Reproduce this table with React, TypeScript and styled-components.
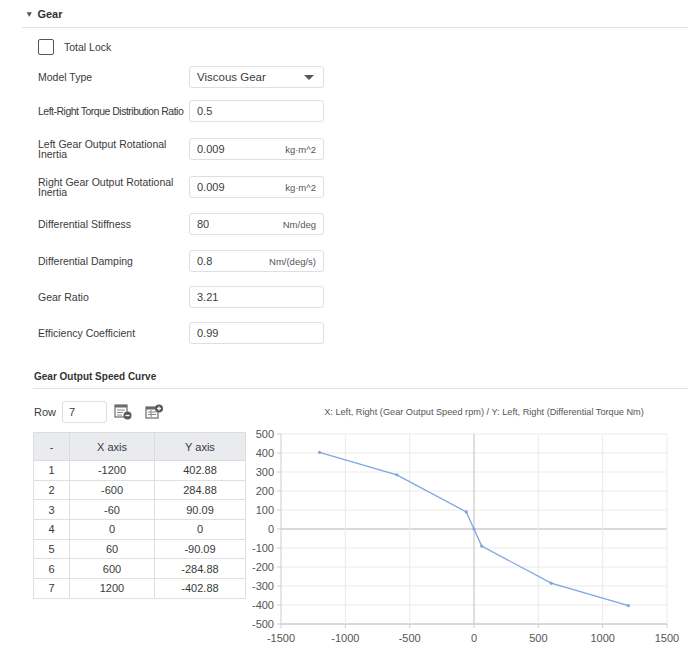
import React from 'react';
import styled, { createGlobalStyle } from 'styled-components';

const GlobalStyle = createGlobalStyle`
  html, body {
    margin: 0;
    padding: 0;
    background: #ffffff;
  }
  body {
    font-family: "Liberation Sans", Arial, sans-serif;
    color: #3a3a3a;
  }
  * {
    box-sizing: border-box;
  }
`;

const Page = styled.div`
  width: 698px;
  padding: 0 10px 0 22px;
`;

const SectionHeader = styled.div`
  height: 28px;
  display: flex;
  align-items: center;
  gap: 4px;
  padding-left: 3px;
  border-bottom: 1px solid #e4e4e4;
  font-size: 11px;
  font-weight: bold;
  color: #333;
`;

const Caret = styled.span`
  font-size: 8.5px;
  color: #555;
`;

const FormBody = styled.div`
  padding-left: 16px;
  display: flex;
  flex-direction: column;
`;

const FormRow = styled.div<{ $space?: number }>`
  display: flex;
  align-items: center;
  height: 22px;
  margin-top: ${(p) => p.$space ?? 14}px;
`;

const CheckBox = styled.span`
  width: 16px;
  height: 16px;
  border: 1.5px solid #555;
  border-radius: 2px;
  margin-right: 10px;
`;

const CheckLabel = styled.span`
  font-size: 10.5px;
  color: #3a3a3a;
`;

const Label = styled.div<{ $tight?: boolean }>`
  width: 151px;
  flex-shrink: 0;
  font-size: 10.5px;
  letter-spacing: ${(p) => (p.$tight ? '-0.5px' : '0')};
  white-space: ${(p) => (p.$tight ? 'nowrap' : 'normal')};
  line-height: 10px;
  padding-right: 12px;
  color: #3a3a3a;
`;

const Field = styled.div`
  width: 135px;
  height: 22px;
  border: 1px solid #dcdfe4;
  border-radius: 3px;
  display: flex;
  align-items: center;
  justify-content: space-between;
  padding: 0 7px 0 7px;
  background: #fff;
`;

const Value = styled.span`
  font-size: 11px;
  color: #3c3c3c;
`;

const SelectValue = styled.span`
  font-size: 11.5px;
  color: #3c3c3c;
`;

const Unit = styled.span`
  font-size: 9.5px;
  color: #555;
`;

const SelectArrow = styled.span`
  width: 0;
  height: 0;
  border-left: 5px solid transparent;
  border-right: 5px solid transparent;
  border-top: 5px solid #555;
  margin-right: 2px;
`;

const Curve = styled.div`
  padding-left: 11px;
  margin-top: 21px;
`;

const SubHeader = styled.div`
  height: 24px;
  display: flex;
  align-items: center;
  padding-left: 1px;
  border-bottom: 1px solid #e4e4e4;
  font-size: 10px;
  font-weight: bold;
  color: #333;
`;

const Columns = styled.div`
  display: flex;
  gap: 3px;
  padding-top: 12px;
`;

const LeftColumn = styled.div`
  width: 212px;
  flex-shrink: 0;
`;

const RightColumn = styled.div`
  flex: 1;
  display: flex;
  flex-direction: column;
`;

const Toolbar = styled.div`
  height: 22px;
  display: flex;
  align-items: center;
`;

const RowLabel = styled.span`
  font-size: 11px;
  padding-left: 1px;
  width: 29px;
  color: #3a3a3a;
`;

const RowInput = styled.div`
  width: 45px;
  height: 22px;
  border: 1px solid #dcdfe4;
  border-radius: 3px;
  display: flex;
  align-items: center;
  padding-left: 6px;
  font-size: 11px;
  color: #3c3c3c;
`;

const IconButton = styled.span<{ $ml: number }>`
  display: inline-flex;
  margin-left: ${(p) => p.$ml}px;
`;

const Table = styled.table`
  margin-top: 9px;
  width: 212px;
  border-collapse: collapse;
  font-size: 11px;
  color: #3a3a3a;
  table-layout: fixed;
`;

const HeadCell = styled.th<{ $w: number }>`
  width: ${(p) => p.$w}px;
  height: 28px;
  background: #e9ebee;
  border: 1px solid #dcdcdc;
  font-weight: normal;
  text-align: center;
  padding: 0;
`;

const Cell = styled.td`
  height: 19.7px;
  border: 1px solid #e0e0e0;
  text-align: center;
  padding: 0;
  line-height: 12px;
`;

const ChartTitle = styled.div`
  height: 22px;
  display: flex;
  align-items: center;
  justify-content: center;
  padding-left: 32px;
  font-size: 9.2px;
  color: #555;
  white-space: nowrap;
`;

const ChartSvg = styled.svg`
  display: block;
`;

const points: [number, number][] = [
  [-1200, 402.88],
  [-600, 284.88],
  [-60, 90.09],
  [0, 0],
  [60, -90.09],
  [600, -284.88],
  [1200, -402.88],
];

const X0 = 33;
const X1 = 419;
const Y0 = 11;
const Y1 = 201;
const sx = (v: number) => X0 + ((v + 1500) / 3000) * (X1 - X0);
const sy = (v: number) => Y0 + ((500 - v) / 1000) * (Y1 - Y0);

const Chart: React.FC = () => {
  const xs = [-1500, -1000, -500, 0, 500, 1000, 1500];
  const ys = [500, 400, 300, 200, 100, 0, -100, -200, -300, -400, -500];
  const path = points.map(([x, y], i) => `${i ? 'L' : 'M'}${sx(x)},${sy(y)}`).join(' ');
  return (
    <ChartSvg width={440} height={229} viewBox="0 0 440 229">
      {ys.map((v) => (
        <line
          key={`h${v}`}
          x1={X0}
          x2={X1}
          y1={sy(v)}
          y2={sy(v)}
          stroke={v === 0 || v === -500 ? '#cdcdcd' : '#ebebeb'}
          strokeWidth={v === 0 || v === -500 ? 1.3 : 1}
        />
      ))}
      {xs.map((v) => (
        <line
          key={`v${v}`}
          x1={sx(v)}
          x2={sx(v)}
          y1={Y0}
          y2={Y1}
          stroke={v === 0 || v === -1500 ? '#cdcdcd' : '#ebebeb'}
          strokeWidth={v === 0 ? 1.3 : 1}
        />
      ))}
      {ys.map((v) => (
        <line key={`yt${v}`} x1={X0 - 4} x2={X0} y1={sy(v)} y2={sy(v)} stroke="#cdcdcd" />
      ))}
      {xs.map((v) => (
        <line key={`xt${v}`} x1={sx(v)} x2={sx(v)} y1={Y1} y2={Y1 + 4} stroke="#cdcdcd" />
      ))}
      {ys.map((v) => (
        <text
          key={`yl${v}`}
          x={X0 - 7}
          y={sy(v) + 4}
          textAnchor="end"
          fontSize={11}
          fill="#555"
          fontFamily='"Liberation Sans", Arial, sans-serif'
        >
          {v}
        </text>
      ))}
      {xs.map((v) => (
        <text
          key={`xl${v}`}
          x={sx(v)}
          y={219}
          textAnchor="middle"
          fontSize={11}
          fill="#555"
          fontFamily='"Liberation Sans", Arial, sans-serif'
        >
          {v}
        </text>
      ))}
      <path d={path} fill="none" stroke="#7ea6e0" strokeWidth={1.3} />
      {points.map(([x, y]) => (
        <circle key={x} cx={sx(x)} cy={sy(y)} r={1.6} fill="#7ea6e0" />
      ))}
    </ChartSvg>
  );
};

const RowBelowIcon = () => (
  <svg width="19" height="16" viewBox="0 0 19 16">
    <rect x="1" y="1" width="12" height="12" fill="#fff" stroke="#6b6b6b" strokeWidth="1.2" />
    <rect x="1" y="1" width="12" height="2.5" fill="#6b6b6b" />
    <line x1="3" x2="11" y1="6" y2="6" stroke="#888" strokeWidth="1" />
    <line x1="3" x2="9" y1="8.5" y2="8.5" stroke="#888" strokeWidth="1" />
    <line x1="3" x2="8" y1="11" y2="11" stroke="#888" strokeWidth="1" />
    <circle cx="13.5" cy="11.5" r="4" fill="#5a5a5a" />
    <line x1="11.5" x2="15.5" y1="11.5" y2="11.5" stroke="#fff" strokeWidth="1.3" />
  </svg>
);

const RowAboveIcon = () => (
  <svg width="19" height="16" viewBox="0 0 19 16">
    <rect x="1" y="3" width="12" height="11" fill="#fff" stroke="#6b6b6b" strokeWidth="1.2" />
    <rect x="1" y="3" width="12" height="2.5" fill="#6b6b6b" />
    <line x1="3" x2="11" y1="8" y2="8" stroke="#888" strokeWidth="1" />
    <line x1="3" x2="11" y1="10.5" y2="10.5" stroke="#888" strokeWidth="1" />
    <line x1="6" x2="6" y1="6" y2="13" stroke="#888" strokeWidth="1" />
    <circle cx="14" cy="4.5" r="4" fill="#5a5a5a" />
    <line x1="12" x2="16" y1="4.5" y2="4.5" stroke="#fff" strokeWidth="1.3" />
    <line x1="14" x2="14" y1="2.5" y2="6.5" stroke="#fff" strokeWidth="1.3" />
  </svg>
);

type FieldDef = { label: string; value: string; unit?: string; space: number; tight?: boolean };

const fields: FieldDef[] = [
  { label: 'Left-Right Torque Distribution Ratio', value: '0.5', space: 12, tight: true },
  { label: 'Left Gear Output Rotational Inertia', value: '0.009', unit: 'kg·m^2', space: 16 },
  { label: 'Right Gear Output Rotational Inertia', value: '0.009', unit: 'kg·m^2', space: 16 },
  { label: 'Differential Stiffness', value: '80', unit: 'Nm/deg', space: 15 },
  { label: 'Differential Damping', value: '0.8', unit: 'Nm/(deg/s)', space: 15 },
  { label: 'Gear Ratio', value: '3.21', space: 14 },
  { label: 'Efficiency Coefficient', value: '0.99', space: 14 },
];

export default function App() {
  return (
    <>
      <GlobalStyle />
      <Page>
        <SectionHeader>
          <Caret>▼</Caret>
          Gear
        </SectionHeader>
        <FormBody>
          <FormRow $space={8}>
            <CheckBox />
            <CheckLabel>Total Lock</CheckLabel>
          </FormRow>
          <FormRow $space={8}>
            <Label>Model Type</Label>
            <Field>
              <SelectValue>Viscous Gear</SelectValue>
              <SelectArrow />
            </Field>
          </FormRow>
          {fields.map((f) => (
            <FormRow key={f.label} $space={f.space}>
              <Label $tight={f.tight}>{f.label}</Label>
              <Field>
                <Value>{f.value}</Value>
                {f.unit && <Unit>{f.unit}</Unit>}
              </Field>
            </FormRow>
          ))}
        </FormBody>
        <Curve>
          <SubHeader>Gear Output Speed Curve</SubHeader>
          <Columns>
            <LeftColumn>
              <Toolbar>
                <RowLabel>Row</RowLabel>
                <RowInput>7</RowInput>
                <IconButton $ml={7}>
                  <RowBelowIcon />
                </IconButton>
                <IconButton $ml={12}>
                  <RowAboveIcon />
                </IconButton>
              </Toolbar>
              <Table>
                <thead>
                  <tr>
                    <HeadCell $w={36}>-</HeadCell>
                    <HeadCell $w={85}>X axis</HeadCell>
                    <HeadCell $w={91}>Y axis</HeadCell>
                  </tr>
                </thead>
                <tbody>
                  {points.map(([x, y], i) => (
                    <tr key={i}>
                      <Cell>{i + 1}</Cell>
                      <Cell>{x}</Cell>
                      <Cell>{y === 0 ? '0' : y.toFixed(2)}</Cell>
                    </tr>
                  ))}
                </tbody>
              </Table>
            </LeftColumn>
            <RightColumn>
              <ChartTitle>X: Left, Right (Gear Output Speed rpm) / Y: Left, Right (Differential Torque Nm)</ChartTitle>
              <Chart />
            </RightColumn>
          </Columns>
        </Curve>
      </Page>
    </>
  );
}
